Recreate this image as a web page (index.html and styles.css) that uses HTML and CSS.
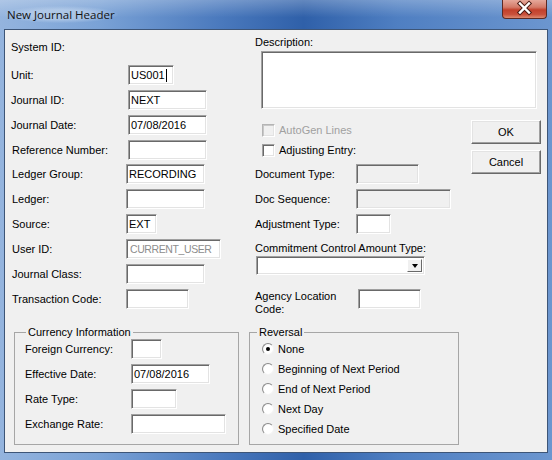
FILE: index.html
```html
<!DOCTYPE html>
<html lang="en">
<head>
  <meta charset="UTF-8">
  <meta name="viewport" content="width=device-width, initial-scale=1.0">
  <title>New Journal Header</title>
  <link rel="stylesheet" href="styles.css">
</head>
<body>
  <div class="window">
    <div class="titlebar">
      <span class="title">New Journal Header</span>
      <div class="close">
        <svg width="45" height="19" viewBox="0 0 45 19">
          <path d="M18 4.5 L27 13.5 M27 4.5 L18 13.5" stroke="#4a1b14" stroke-width="4.4" stroke-linecap="square"/>
          <path d="M18 4.5 L27 13.5 M27 4.5 L18 13.5" stroke="#fff" stroke-width="2.4" stroke-linecap="square"/>
        </svg>
      </div>
    </div>

    <div class="client">
      <div class="top">
        <div class="left">
          <div class="row first"><label>System ID:</label></div>
          <div class="row"><label>Unit:</label><div class="field w46">US001<span class="caret"></span></div></div>
          <div class="row"><label>Journal ID:</label><div class="field w79">NEXT</div></div>
          <div class="row"><label>Journal Date:</label><div class="field w79">07/08/2016</div></div>
          <div class="row"><label class="nudge">Reference Number:</label><div class="field w79"></div></div>
          <div class="row alt shift"><label>Ledger Group:</label><div class="field w79">RECORDING</div></div>
          <div class="row alt"><label>Ledger:</label><div class="field w79"></div></div>
          <div class="row alt"><label>Source:</label><div class="field w31">EXT</div></div>
          <div class="row alt"><label>User ID:</label><div class="field w95 readonly">CURRENT_USER</div></div>
          <div class="row alt"><label>Journal Class:</label><div class="field w79"></div></div>
          <div class="row alt"><label>Transaction Code:</label><div class="field w63"></div></div>
        </div>

        <div class="right">
          <div class="caption">Description:</div>
          <div class="field memo"></div>
          <div class="lower">
            <div class="opts">
              <div class="check disabled"><span class="box"></span>AutoGen Lines</div>
              <div class="check"><span class="box"></span>Adjusting Entry:</div>
              <div class="row wide first-r"><label>Document Type:</label><div class="field w63 off"></div></div>
              <div class="row wide"><label>Doc Sequence:</label><div class="field w95 off"></div></div>
              <div class="row wide"><label>Adjustment Type:</label><div class="field w35"></div></div>
              <div class="caption combo-cap">Commitment Control Amount Type:</div>
              <div class="combo"><span class="drop"><span class="arrow"></span></span></div>
              <div class="row agency"><label>Agency Location<br>Code:</label><div class="field w63"></div></div>
            </div>
            <div class="buttons">
              <button class="btn">OK</button>
              <button class="btn">Cancel</button>
            </div>
          </div>
        </div>
      </div>

      <div class="bottom">
        <fieldset class="group currency">
          <legend>Currency Information</legend>
          <div class="row"><label>Foreign Currency:</label><div class="field w31"></div></div>
          <div class="row"><label>Effective Date:</label><div class="field w79">07/08/2016</div></div>
          <div class="row"><label>Rate Type:</label><div class="field w46"></div></div>
          <div class="row"><label>Exchange Rate:</label><div class="field w95"></div></div>
        </fieldset>
        <fieldset class="group reversal">
          <legend>Reversal</legend>
          <div class="radio on"><span class="dot"></span>None</div>
          <div class="radio"><span class="dot"></span>Beginning of Next Period</div>
          <div class="radio"><span class="dot"></span>End of Next Period</div>
          <div class="radio"><span class="dot"></span>Next Day</div>
          <div class="radio"><span class="dot"></span>Specified Date</div>
        </fieldset>
      </div>
    </div>
  </div>
</body>
</html>
```

FILE: styles.css
```css
body {
  margin: 0;
  font-family: "Liberation Sans", Arial, sans-serif;
  font-size: 11px;
  color: #000;
}
.window {
  width: 552px;
  height: 460px;
  display: flex;
  flex-direction: column;
  background: linear-gradient(90deg, #94b4de 0%, #7aa2d6 18%, #4a79bd 40%, #2f60a9 55%, #4f7fc2 72%, #6c96cf 100%);
}
.titlebar {
  height: 29px;
  position: relative;
  background: linear-gradient(180deg, rgba(255,255,255,.25), rgba(255,255,255,0) 60%);
}
.title {
  position: absolute;
  left: 4px;
  top: 6px;
  padding: 1px 3px;
  font-family: "Open Sans", sans-serif;
  font-size: 11.5px;
  color: #111;
  background: radial-gradient(ellipse at center, rgba(200,218,240,.55) 40%, rgba(200,218,240,0) 72%);
}
.close {
  position: absolute;
  right: 5px;
  top: 0;
  width: 45px;
  height: 19px;
  border: 1px solid #5c2a24;
  border-top: none;
  border-radius: 0 0 4px 4px;
  box-sizing: border-box;
  background: linear-gradient(180deg, #e6a89a 0%, #d47a68 40%, #c2402b 55%, #c9503b 80%, #dd8a70 100%);
}
.close svg {
  display: block;
  margin-top: -1px;
  margin-left: -1px;
}
.client {
  flex: 1;
  margin: 0 4px 7px 4px;
  border: 1px solid #3d5577;
  background: #f0f0f0;
  display: flex;
  flex-direction: column;
}
.top {
  display: flex;
  height: 296px;
}
.left {
  width: 229px;
  padding: 7px 0 0 6px;
  display: flex;
  flex-direction: column;
  gap: 5px;
}
.row {
  display: flex;
  align-items: center;
  height: 20px;
}
.row label {
  width: 117px;
  flex-shrink: 0;
}
.row.first {
  margin-bottom: 3px;
}
.row .nudge {
  padding-left: 1px;
  width: 116px;
}
.row.alt {
  padding-left: 1px;
}
.row.alt label {
  width: 114px;
}
.row.shift {
  margin-top: -1px;
}
.field {
  height: 20px;
  box-sizing: border-box;
  background: #fff;
  border: 1px solid;
  border-color: #a0a0a0 #fff #fff #a0a0a0;
  box-shadow: inset 1px 1px 0 #696969, inset -1px -1px 0 #e3e3e3;
  padding: 3px 0 0 2px;
  line-height: 13px;
  white-space: nowrap;
  overflow: hidden;
}
.field.readonly {
  color: #8d8d8d;
  font-size: 10.5px;
  letter-spacing: -0.4px;
  padding-left: 3px;
}
.field.off {
  background: #f0f0f0;
}
.caret {
  display: inline-block;
  width: 1px;
  height: 13px;
  background: #000;
  vertical-align: top;
  margin-left: 1px;
}
.w31 { width: 31px; }
.w35 { width: 35px; }
.w46 { width: 46px; }
.w63 { width: 63px; }
.w79 { width: 79px; }
.w95 { width: 95px; }

.right {
  flex: 1;
  padding: 6px 0 0 15px;
}
.caption {
  line-height: 13px;
}
.memo {
  width: 276px;
  height: 58px;
  margin: 2px 0 0 6px;
}
.lower {
  display: flex;
  margin-top: 11px;
}
.opts {
  display: flex;
  flex-direction: column;
}
.check {
  height: 20px;
  display: flex;
  align-items: center;
  gap: 4px;
  padding-left: 7px;
}
.check .box {
  width: 13px;
  height: 13px;
  box-sizing: border-box;
  background: #fff;
  border: 1px solid;
  border-color: #a0a0a0 #fff #fff #a0a0a0;
  box-shadow: inset 1px 1px 0 #696969, inset -1px -1px 0 #e3e3e3;
}
.check.disabled {
  color: #a0a0a0;
}
.check.disabled .box {
  background: #f0f0f0;
  border-color: #b4b4b4 #fff #fff #b4b4b4;
  box-shadow: inset 1px 1px 0 #c8c8c8, inset -1px -1px 0 #e3e3e3;
}
.row.wide label {
  width: 101px;
}
.row.first-r {
  margin-top: 4px;
}
.row.wide + .row.wide {
  margin-top: 5px;
}
.combo-cap {
  margin-top: 8px;
}
.combo {
  width: 169px;
  height: 19px;
  margin: 1px 0 0 1px;
  box-sizing: border-box;
  background: #fff;
  border: 1px solid;
  border-color: #a0a0a0 #fff #fff #a0a0a0;
  box-shadow: inset 1px 1px 0 #696969, inset -1px -1px 0 #e3e3e3;
  display: flex;
  justify-content: flex-end;
  padding: 2px;
}
.drop {
  width: 15px;
  height: 13px;
  box-sizing: border-box;
  background: #f0f0f0;
  border: 1px solid;
  border-color: #fff #696969 #696969 #fff;
  display: flex;
  align-items: center;
  justify-content: center;
}
.arrow {
  width: 0;
  height: 0;
  border-left: 3.5px solid transparent;
  border-right: 3.5px solid transparent;
  border-top: 4px solid #000;
}
.row.agency {
  align-items: flex-start;
  margin-top: 14px;
  height: auto;
}
.row.agency label {
  width: 103px;
  line-height: 13px;
  padding-top: 1px;
}
.buttons {
  margin: 0 6px 0 auto;
  display: flex;
  flex-direction: column;
  gap: 6px;
}
.btn {
  width: 70px;
  height: 24px;
  font-family: inherit;
  font-size: 11px;
  color: #000;
  background: #f0f0f0;
  border: 1px solid;
  border-color: #fff #696969 #696969 #fff;
  box-shadow: inset -1px -1px 0 #a0a0a0, inset 1px 1px 0 #e3e3e3;
  padding: 0;
}

.bottom {
  display: flex;
  gap: 10px;
  padding-left: 9px;
}
.group {
  margin: 0;
  padding: 0;
  height: 119px;
  box-sizing: border-box;
  border: 1px solid #a6a6a6;
}
.group legend {
  line-height: 13px;
  padding: 0 2px;
}
.currency {
  width: 225px;
  padding-left: 10px;
  display: flex;
  flex-direction: column;
  gap: 5px;
}
.currency legend {
  margin-left: 1px;
}
.currency .row label {
  width: 106px;
}
.reversal {
  width: 210px;
}
.reversal legend {
  margin-left: 7px;
}
.radio {
  height: 20px;
  display: flex;
  align-items: center;
  gap: 4px;
  padding-left: 12px;
}
.dot {
  width: 12px;
  height: 12px;
  box-sizing: border-box;
  border-radius: 50%;
  border: 1px solid;
  border-color: #8a8a8a #f4f4f4 #f4f4f4 #8a8a8a;
  background: radial-gradient(circle at 60% 60%, #fff 55%, #e2e2e2);
  display: flex;
  align-items: center;
  justify-content: center;
}
.radio.on .dot::after {
  content: "";
  width: 4px;
  height: 4px;
  border-radius: 50%;
  background: #000;
}
```
